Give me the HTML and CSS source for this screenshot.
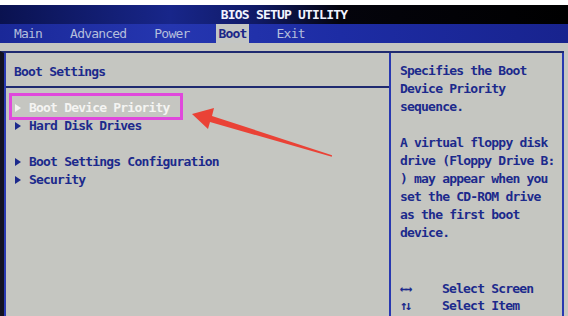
FILE: index.html
```html
<!DOCTYPE html>
<html lang="en">
<head>
    <meta charset="UTF-8">
    <meta name="viewport" content="width=device-width, initial-scale=1.0">
    <title>BIOS Setup Utility</title>
    <link rel="stylesheet" href="styles.css">
</head>
<body>
    <div class="screen">
        <div class="titlebar">BIOS SETUP UTILITY</div>
        <nav class="menubar">
            <span class="menu-item">Main</span>
            <span class="menu-item">Advanced</span>
            <span class="menu-item">Power</span>
            <span class="menu-item active">Boot</span>
            <span class="menu-item">Exit</span>
        </nav>

        <div class="content">
            <div class="panel">
                <section class="main">
                    <h1 class="section-title">Boot Settings</h1>
                    <ul class="items">
                        <li class="item selected marked">Boot Device Priority</li>
                        <li class="item">Hard Disk Drives</li>
                        <li class="spacer"></li>
                        <li class="item">Boot Settings Configuration</li>
                        <li class="item">Security</li>
                    </ul>
                </section>
                <aside class="help">
                    <div class="help-text">
                        <div>Specifies the Boot</div>
                        <div>Device Priority</div>
                        <div>sequence.</div>
                        <div class="blank"></div>
                        <div>A virtual floppy disk</div>
                        <div>drive (Floppy Drive B:</div>
                        <div>) may appear when you</div>
                        <div>set the CD-ROM drive</div>
                        <div>as the first boot</div>
                        <div>device.</div>
                    </div>
                    <div class="keys">
                        <div class="key"><span class="key-glyph">&larr;&rarr;</span><span>Select Screen</span></div>
                        <div class="key"><span class="key-glyph">&uarr;&darr;</span><span>Select Item</span></div>
                    </div>
                </aside>
            </div>
        </div>

        <!-- red pointer drawn over the screenshot -->
        <svg class="pointer" width="568" height="316" viewBox="0 0 568 316">
            <polygon points="192,114 214,108 212,116 332,155.2 331.8,156.8 210,122 208,129" fill="#ea4236"/>
        </svg>
    </div>
</body>
</html>
```

FILE: styles.css
```css
body {
    margin: 0;
    background: #ffffff;
    font-family: "DejaVu Sans Mono", "Liberation Mono", monospace;
    font-size: 13px;
    font-weight: bold;
    letter-spacing: -0.8px;
}

.screen {
    position: relative;
    width: 568px;
    height: 316px;
    padding-top: 5px;
    box-sizing: border-box;
    overflow: hidden;
}

.titlebar {
    height: 19px;
    line-height: 19px;
    text-align: center;
    color: #f2f4ff;
    background: linear-gradient(90deg, #0a1250 0%, #18268a 30%, #101a66 45%, #04040c 60%, #000000 100%);
}

.menubar {
    display: flex;
    gap: 28px;
    height: 19px;
    line-height: 19px;
    padding-left: 14px;
    color: #b4bedc;
    font-weight: normal;
    background: linear-gradient(90deg, #1a2898 0%, #2536b0 30%, #1d2ca4 60%, #18238e 100%);
}

.menu-item.active {
    margin-left: -1px;
    padding: 0 2px;
    background: #c4c6c4;
    color: #1b2788;
    font-weight: bold;
}

.content {
    height: 273px;
    padding-top: 8px;
    box-sizing: border-box;
    background: #c5c6c1;
}

.panel {
    display: flex;
    width: 564px;
    height: 265px;
    box-sizing: border-box;
    border-left: 4px solid #121220;
    border-top: 2px solid #1f2a70;
    color: #1c2a8c;
}

.main {
    flex: none;
    width: 383px;
    border-left: 2px solid #2838b0;
}

.section-title {
    margin: 0;
    padding: 10px 0 5px 8px;
    font-size: 13px;
    line-height: 18px;
    border-bottom: 2px solid #1f2a70;
}

.items {
    list-style: none;
    margin: 11px 0 0;
    padding: 0 0 0 9px;
}

.item {
    position: relative;
    height: 18px;
    line-height: 18px;
}

.item::before {
    content: "";
    display: inline-block;
    width: 0;
    height: 0;
    margin-right: 8px;
    border-top: 4px solid transparent;
    border-bottom: 4px solid transparent;
    border-left: 6px solid #1c2a8c;
}

.spacer {
    height: 18px;
}

.item.selected {
    color: #f4f4f2;
}

.item.selected::before {
    border-left-color: #f4f4f2;
}

.item.marked::after {
    content: "";
    position: absolute;
    left: -6px;
    top: -6px;
    width: 174px;
    height: 27px;
    box-sizing: border-box;
    border: 3px solid #e048dc;
}

.help {
    flex: 1;
    display: flex;
    flex-direction: column;
    justify-content: space-between;
    padding: 9px 0 2px 9px;
    border-left: 2px solid #2838b0;
    border-right: 2px solid #2838b0;
}

.help-text div {
    height: 18px;
    line-height: 18px;
    white-space: nowrap;
}

.key {
    display: flex;
    line-height: 17px;
}

.key-glyph {
    width: 42px;
    font-size: 13px;
    letter-spacing: -3px;
}

.pointer {
    position: absolute;
    left: 0;
    top: 0;
    pointer-events: none;
}
```
